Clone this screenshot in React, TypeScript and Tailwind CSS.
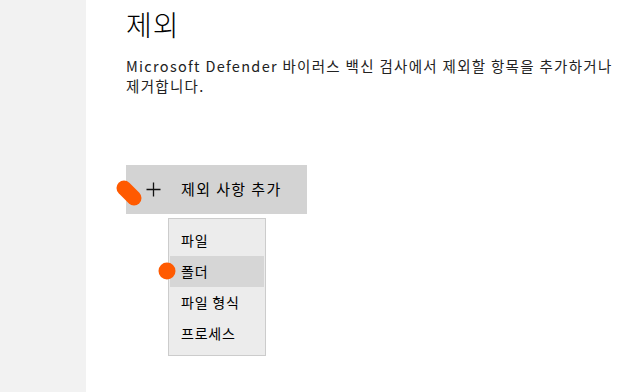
import React from "react";

const items = ["파일", "폴더", "파일 형식", "프로세스"];

export default function App() {
  return (
    <div
      className="relative flex h-[392px] w-[635px] overflow-hidden bg-white text-[#1a1a1a]"
      style={{ fontFamily: '"Noto Sans CJK KR", "Noto Sans", sans-serif' }}
    >
      {/* 사이드바 */}
      <div className="w-[86px] shrink-0 bg-[#f2f2f2]" />

      {/* 본문 */}
      <div className="flex flex-1 flex-col pl-[40px]">
        <h1 className="mt-[6px] text-[28px] font-light leading-[36px] tracking-[1px] text-black">제외</h1>
        <p className="mt-[14px] w-[490px] text-[14.5px] leading-[20px] tracking-[1.3px] text-[#222]">
          Microsoft Defender 바이러스 백신 검사에서 제외할 항목을 추가하거나 제거합니다.
        </p>

        <button className="mt-[69px] flex h-[49px] w-[181px] items-center bg-[#d3d3d3] pl-[20px] text-[15px] tracking-[1.4px] text-black">
          <svg width="15" height="15" viewBox="0 0 15 15" className="shrink-0">
            <path d="M7.5 0.5V14.5M0.5 7.5H14.5" stroke="#111" strokeWidth="1.3" />
          </svg>
          <span className="ml-[20px]">제외 사항 추가</span>
        </button>

        {/* 드롭다운 메뉴 */}
        <div className="ml-[42px] mt-[4px] w-[98px] border border-[#cccccc] bg-[#ececec] py-[6px]">
          {items.map((item, i) => (
            <div
              key={item}
              className={`mx-[1px] flex h-[31px] items-center pl-[11px] text-[14px] tracking-[0.8px] text-black ${
                i === 1 ? "bg-[#d6d6d6]" : ""
              }`}
            >
              {item}
            </div>
          ))}
        </div>
      </div>

      {/* 클릭 표시 */}
      <svg className="pointer-events-none absolute left-0 top-0" width="635" height="392">
        <line x1="124" y1="188" x2="134" y2="198" stroke="#ff5a00" strokeWidth="15" strokeLinecap="round" />
        <circle cx="167" cy="271" r="8.5" fill="#ff5a00" />
      </svg>
    </div>
  );
}
